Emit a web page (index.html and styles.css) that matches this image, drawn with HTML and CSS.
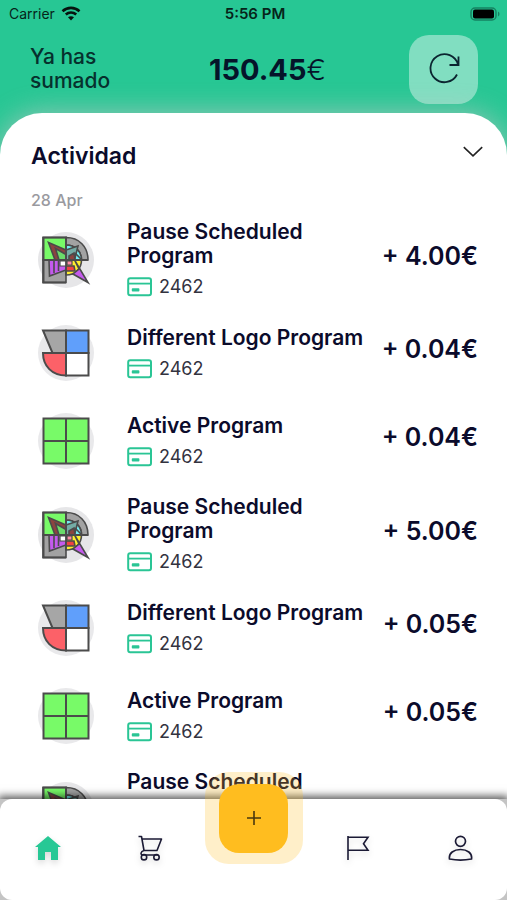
FILE: index.html
```html
<!DOCTYPE html>
<html lang="es">
<head>
<meta charset="utf-8">
<meta name="viewport" content="width=device-width, initial-scale=1">
<title>Actividad</title>
<link rel="stylesheet" href="styles.css">
</head>
<body>
<svg class="defs" width="0" height="0" aria-hidden="true">
  <symbol id="card" viewBox="0 0 26 20">
    <rect x="1.2" y="1.2" width="22.8" height="17" rx="2" fill="none" stroke="#2ac595" stroke-width="2"/>
    <path d="M1 6.6h23" stroke="#2ac595" stroke-width="1.8"/>
    <rect x="4.8" y="11.2" width="7.6" height="3.4" rx=".8" fill="#2ac595"/>
  </symbol>
  <symbol id="logo-pause" viewBox="0 0 56 56">
    <circle cx="28" cy="28" r="28" fill="#e6e6e8"/>
    <g stroke="#4b4b4b" stroke-width="1.600">
      <path d="M28 5.500c13 0 22 9 22 22.500h-6.500c0-9-6.500-15-15.500-15z" fill="#a2a2a2"/>
      <path d="M5 5.500h23V28H5z" fill="#78fa68"/>
      <path d="M5 28h23v22.500H5z" fill="#a2a2a2"/>
      <path d="M28 13c8.500 0 15.500 6 15.500 15H28z" fill="#74edf2"/>
      <path d="M28 28h15.500c0 9-6.500 15-15.500 15z" fill="#fff02e"/>
      <path d="M11 28h17v10l-16.500 6z" fill="#c45aed"/>
      <path d="M10.500 10.500L28 18v10H17z" fill="#8c4440"/>
      <path d="M17.500 16.500l10.500 6V28h-7z" fill="#6bdc6a"/>
      <path d="M28 18l12-4-3.500 14H28z" fill="#74aca5"/>
      <path d="M36.500 28L50 50.500 35 42l6-5z" fill="#c45aed"/>
      <path d="M28 34h8l1 5h-9z" fill="#ef4242"/>
      <path d="M31 24l5-3 1 7h-6z" fill="#8c4440"/>
      <path d="M22 29h6v5h-6z" fill="#fff" stroke-width="1.200"/>
      <path d="M29 29h5v4h-5z" fill="#ff8ca5" stroke-width="1.200"/>
      <path d="M16 28v13M20.500 28v11M28 13v30M37 21l6 6" fill="none"/>
    </g>
    <path d="M28 50.500H5.500v-45H28V28M5 28h45" fill="none" stroke="#4b4b4b" stroke-width="2"/>
  </symbol>
  <symbol id="logo-different" viewBox="0 0 56 56">
    <circle cx="28" cy="28" r="28" fill="#e9e9eb"/>
    <g stroke="#4b4b4b" stroke-width="2">
      <path d="M5 5.500h23V28H14.500z" fill="#a6a6a6"/>
      <path d="M28 5.500h22.500V28H28z" fill="#609ffb"/>
      <path d="M5 28h23v22.500C14 50.500 5 41 5 28z" fill="#fc6168"/>
      <path d="M28 28h22.500v22.500H28z" fill="#fff"/>
    </g>
  </symbol>
  <symbol id="logo-active" viewBox="0 0 56 56">
    <circle cx="28" cy="28" r="28" fill="#e9e9eb"/>
    <path d="M5.500 5.500h45v45h-45zM28 5.500v45M5.500 28h45" fill="#78fa68" stroke="#4b4b4b" stroke-width="2"/>
  </symbol>
</svg>

<div class="status">
  <div class="carrier"><span>Carrier</span>
    <svg width="20" height="15" viewBox="0 0 20 15" fill="none" stroke="#06130e" stroke-width="2.600"><path d="M1.500 5.200c5-4.500 12-4.500 17 0M4.800 8.500c3-2.700 7.400-2.700 10.400 0"/><path d="M10 14.500l-3-3.200c1.700-1.500 4.300-1.500 6 0z" fill="#06130e" stroke="none"/></svg>
  </div>
  <time>5:56 PM</time>
  <svg class="battery" width="31" height="14" viewBox="0 0 31 14"><rect x="1" y="1" width="25" height="12" rx="4" fill="none" stroke="#168361" stroke-width="1.500"/><rect x="3" y="2.500" width="21" height="9" rx="2" fill="#000"/><path d="M28 4.500c2 1 2 4 0 5z" fill="#168361"/></svg>
</div>

<header class="header">
  <p class="label">Ya has sumado</p>
  <p class="total">150.45<span>€</span></p>
  <button class="refresh" type="button" aria-label="Actualizar">
    <svg width="32" height="32" viewBox="0 0 32 32" fill="none" stroke="#0b2530" stroke-width="1.800"><path d="M29 21.500A14 14 0 1 1 30 11.500M30.500 3.500V12H21.500"/></svg>
  </button>
</header>

<main class="sheet">
  <div class="sheet-head">
    <h1>Actividad</h1>
    <button class="toggle" type="button" aria-label="Contraer"><svg width="20" height="12" viewBox="0 0 20 12" fill="none" stroke="#222" stroke-width="1.600"><path d="M.8 1.200l9.200 8.600 9.200-8.600"/></svg></button>
  </div>
  <h2>28 Apr</h2>
  <ul class="list">
    <li><svg class="logo" aria-hidden="true"><use href="#logo-pause"/></svg><div class="info"><h3>Pause Scheduled Program</h3><p><svg class="card" aria-hidden="true"><use href="#card"/></svg>2462</p></div><strong>+ 4.00€</strong></li>
    <li><svg class="logo" aria-hidden="true"><use href="#logo-different"/></svg><div class="info"><h3>Different Logo Program</h3><p><svg class="card" aria-hidden="true"><use href="#card"/></svg>2462</p></div><strong>+ 0.04€</strong></li>
    <li><svg class="logo" aria-hidden="true"><use href="#logo-active"/></svg><div class="info"><h3>Active Program</h3><p><svg class="card" aria-hidden="true"><use href="#card"/></svg>2462</p></div><strong>+ 0.04€</strong></li>
    <li><svg class="logo" aria-hidden="true"><use href="#logo-pause"/></svg><div class="info"><h3>Pause Scheduled Program</h3><p><svg class="card" aria-hidden="true"><use href="#card"/></svg>2462</p></div><strong>+ 5.00€</strong></li>
    <li><svg class="logo" aria-hidden="true"><use href="#logo-different"/></svg><div class="info"><h3>Different Logo Program</h3><p><svg class="card" aria-hidden="true"><use href="#card"/></svg>2462</p></div><strong>+ 0.05€</strong></li>
    <li><svg class="logo" aria-hidden="true"><use href="#logo-active"/></svg><div class="info"><h3>Active Program</h3><p><svg class="card" aria-hidden="true"><use href="#card"/></svg>2462</p></div><strong>+ 0.05€</strong></li>
    <li class="next"><svg class="logo" aria-hidden="true"><use href="#logo-pause"/></svg><div class="info"><h3>Pause Scheduled</h3></div></li>
  </ul>
</main>

<div class="dock">
<nav class="tabs">
  <a href="#inicio" aria-label="Inicio"><svg width="28" height="28" viewBox="0 0 28 28"><path d="M14 2l13 11h-3v13h-7v-8h-6v8H4V13H1z" fill="#27c895"/></svg></a>
  <a href="#tienda" aria-label="Tienda"><svg width="28" height="28" viewBox="0 0 28 28" fill="none" stroke="#1b1a35" stroke-width="1.600" stroke-linejoin="round"><path d="M1.500 2.500h3L7 16.500h13.500M5 5H24.500l-4.500 11.500M7 16.500c-3.500 1-4 4.500-1 4.500h15"/><circle cx="7" cy="23.200" r="2.700"/><circle cx="19.500" cy="23.200" r="2.700"/></svg></a>
  <span class="slot"></span>
  <a href="#retos" aria-label="Retos"><svg width="28" height="28" viewBox="0 0 28 28" fill="none" stroke="#1b1a35" stroke-width="1.600"><path d="M5 2v24M5 3.300h20l-4.500 6.500 4.500 6.500H5"/></svg></a>
  <a href="#perfil" aria-label="Perfil"><svg width="28" height="28" viewBox="0 0 28 28" fill="none" stroke="#1b1a35" stroke-width="1.700" stroke-linejoin="round"><circle cx="14.500" cy="7.300" r="5"/><path d="M3.500 25c-1-6 4.500-9.500 11-9.500S26.500 19 25.500 25c-6 1.200-16 1.200-22 0z"/></svg></a>
</nav>
<button class="add" type="button" aria-label="Añadir"><span><svg width="16" height="16" viewBox="0 0 16 16" stroke="#4a380e" stroke-width="1.600"><path d="M8 1v14M1 8h14"/></svg></span></button>
</div>
</body>
</html>
```
FILE: styles.css
```css
* { box-sizing: border-box; }

body {
  margin: 0;
  height: 100vh;
  display: flex;
  flex-direction: column;
  overflow: hidden;
  background: #27c794;
  color: #0b0b2b;
  font-family: Inter, "Liberation Sans", sans-serif;
}

h1, h2, h3, p, ul { margin: 0; padding: 0; }
button { border: 0; padding: 0; font: inherit; color: inherit; background: none; }
svg { display: block; }
.defs { position: absolute; }

.status {
  flex: none;
  height: 27px;
  padding: 0 6px 0 9px;
  display: grid;
  grid-template-columns: 1fr auto 1fr;
  align-items: center;
  font-size: 14px;
  color: #06241a;
}
.carrier { display: flex; align-items: center; gap: 6px; }
.status time { font-weight: 600; font-size: 15px; }
.battery { justify-self: end; }

.header {
  flex: none;
  height: 86px;
  padding: 0 29px 2px 30px;
  display: grid;
  grid-template-columns: 1fr auto 1fr;
  align-items: center;
}
.label { max-width: 110px; font-size: 21px; line-height: 24px; font-weight: 500; color: #06302d; }
.total { font-size: 29px; font-weight: 700; color: #05142a; margin-left: 27px; }
.total span { font-weight: 300; }
.refresh {
  justify-self: end;
  width: 69px;
  height: 69px;
  border-radius: 20px;
  background: rgba(255, 255, 255, .42);
  display: grid;
  place-items: center;
}

.sheet {
  flex: 1;
  min-height: 0;
  padding: 26px 29px 0 31px;
  border-radius: 42px 42px 0 0;
  background: #fff;
  box-shadow: 0 0 28px rgba(200, 200, 200, .7);
  overflow: hidden;
}
.sheet-head { display: flex; justify-content: space-between; align-items: center; height: 34px; }
h1 { font-size: 23px; line-height: 34px; font-weight: 600; }
.toggle { width: 30px; height: 24px; display: grid; place-items: center; margin: 0 -10px 8px 0; }
h2 { margin-top: 16px; font-size: 16px; line-height: 22px; font-weight: 500; color: #9a9a9f; }

.list { list-style: none; margin-top: -1px; }
.list li {
  min-height: 88px;
  padding: 10px 0;
  display: grid;
  grid-template-columns: 68px 1fr auto;
  gap: 0 28px;
  align-items: center;
}
.logo { width: 56px; height: 56px; margin-left: 7px; }
.info { max-width: 245px; margin-right: -28px; }
h3 { font-size: 21px; line-height: 24px; font-weight: 600; max-width: 245px; }
.info p {
  margin-top: 7px;
  display: flex;
  align-items: center;
  gap: 6px;
  font-size: 18px;
  line-height: 24px;
  color: #33333f;
}
.card { width: 26px; height: 20px; }
.list strong { font-size: 25px; font-weight: 600; line-height: 30px; padding-bottom: 8px; white-space: nowrap; }
.list .next { min-height: 99px; }
.next .info { align-self: start; }

.dock { flex: none; position: relative; background: #c4c4c4; box-shadow: 0 -1px 8px 2px rgba(0, 0, 0, .65); }
.tabs {
  height: 101px;
  padding: 0 33px 4px 34px;
  display: flex;
  justify-content: space-between;
  align-items: center;
  background: #fff;
  border-radius: 12px;
}
.tabs svg { filter: drop-shadow(0 3px 3px rgba(0, 0, 0, .15)); }
.slot { width: 28px; }
.add {
  position: absolute;
  top: -27px;
  left: 50%;
  width: 98px;
  height: 92px;
  margin-left: -49px;
  border-radius: 24px;
  background: rgba(255, 190, 30, .24);
  display: grid;
  place-items: center;
}
.add span {
  width: 69px;
  height: 69px;
  border-radius: 20px;
  background: #ffbd1f;
  display: grid;
  place-items: center;
}
```
